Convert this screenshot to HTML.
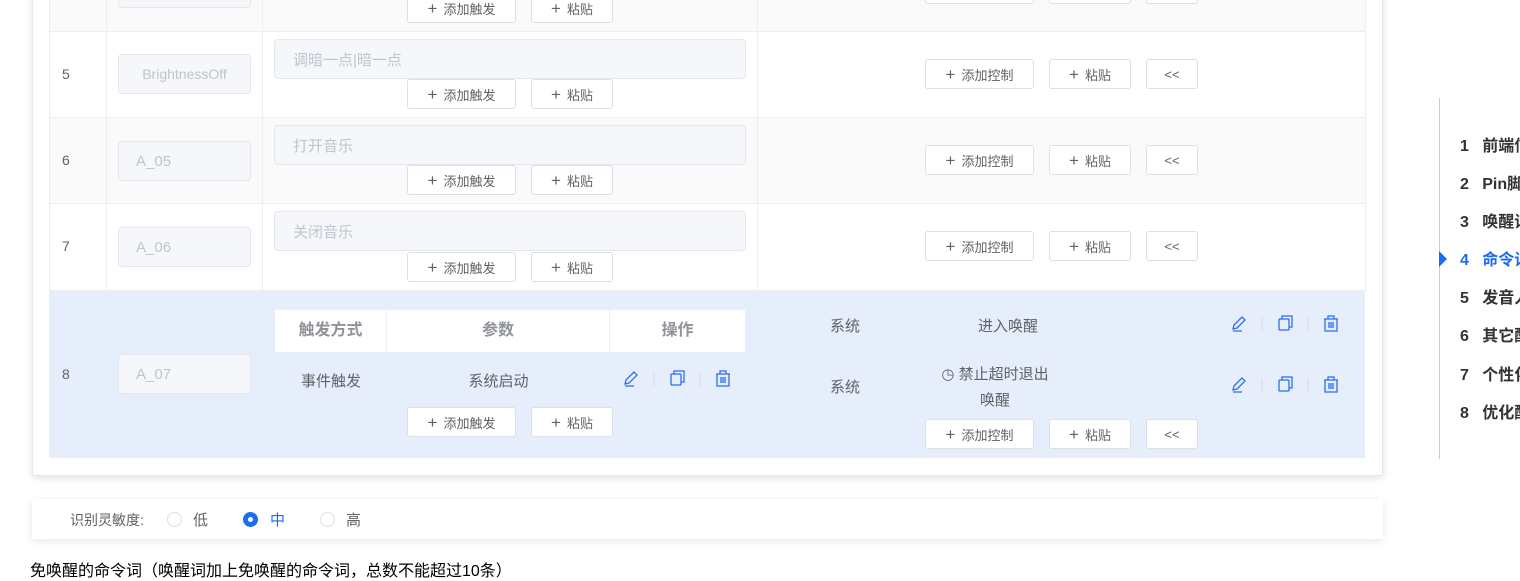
<!DOCTYPE html>
<html><head><meta charset="utf-8"><style>
*{box-sizing:border-box;margin:0;padding:0}
body{width:1520px;height:569px;overflow:hidden;background:#fff;font-family:"Liberation Sans","Noto Sans CJK SC",sans-serif;font-size:14px;color:#606266;position:relative}
.a{position:absolute}
.card{left:32px;top:-10px;width:1351px;height:486px;border:1px solid #e4e7ed;box-shadow:0 2px 8px rgba(0,0,0,.12);background:#fff}
.row{left:49px;width:1316px;border-bottom:1px solid #ebeef5}
.vl{width:1px;background:#ebeef5}
.btn{height:30px;border:1px solid #dcdfe6;border-radius:3px;background:#fff;font-size:13px;color:#606266;display:flex;align-items:center;justify-content:center}
.btn b{font-weight:normal;font-size:17px;margin-right:6px;color:#606266;line-height:1}
.inp{border:1px solid #e4e7ed;border-radius:4px;background:#f5f7fa;color:#c0c4cc;font-size:15px;display:flex;align-items:center}
.nav{font-weight:bold;font-size:15px;color:#333}
</style></head><body>
<div class="a card"></div>
<div class="a row" style="top:-10px;height:42px;background:#fafafa"></div>
<div class="a row" style="top:32px;height:86px;background:#fff"></div>
<div class="a row" style="top:118px;height:86px;background:#fafafa"></div>
<div class="a row" style="top:204px;height:87px;background:#fff"></div>
<div class="a row" style="top:291px;height:167px;background:#e6eefc;border:none"></div>
<div class="a vl" style="left:49px;top:0;height:291px"></div>
<div class="a vl" style="left:106px;top:0;height:291px"></div>
<div class="a vl" style="left:262px;top:0;height:291px"></div>
<div class="a vl" style="left:757px;top:0;height:291px"></div>
<div class="a vl" style="left:1365px;top:0;height:291px"></div>

<div class="a inp" style="left:118px;top:-30px;width:133px;height:38px"></div>
<div class="a btn" style="left:407px;top:-7px;width:109px"><b>+</b>添加触发</div>
<div class="a btn" style="left:531px;top:-7px;width:82px"><b>+</b>粘贴</div>
<div class="a btn" style="left:925px;top:-26px;width:109px"></div>
<div class="a btn" style="left:1049px;top:-26px;width:82px"></div>
<div class="a btn" style="left:1146px;top:-26px;width:52px"></div>

<div class="a" style="left:62px;top:66px">5</div>
<div class="a inp" style="left:118px;top:54px;width:133px;height:40px;justify-content:center;font-size:14px">BrightnessOff</div>
<div class="a inp" style="left:274px;top:39px;width:472px;height:40px;padding-left:18px">调暗一点|暗一点</div>
<div class="a btn" style="left:407px;top:79px;width:109px"><b>+</b>添加触发</div>
<div class="a btn" style="left:531px;top:79px;width:82px"><b>+</b>粘贴</div>
<div class="a btn" style="left:925px;top:59px;width:109px"><b>+</b>添加控制</div>
<div class="a btn" style="left:1049px;top:59px;width:82px"><b>+</b>粘贴</div>
<div class="a btn" style="left:1146px;top:59px;width:52px">&lt;&lt;</div>

<div class="a" style="left:62px;top:152px">6</div>
<div class="a inp" style="left:118px;top:141px;width:133px;height:40px;padding-left:17px">A_05</div>
<div class="a inp" style="left:274px;top:125px;width:472px;height:40px;padding-left:18px">打开音乐</div>
<div class="a btn" style="left:407px;top:165px;width:109px"><b>+</b>添加触发</div>
<div class="a btn" style="left:531px;top:165px;width:82px"><b>+</b>粘贴</div>
<div class="a btn" style="left:925px;top:145px;width:109px"><b>+</b>添加控制</div>
<div class="a btn" style="left:1049px;top:145px;width:82px"><b>+</b>粘贴</div>
<div class="a btn" style="left:1146px;top:145px;width:52px">&lt;&lt;</div>

<div class="a" style="left:62px;top:238px">7</div>
<div class="a inp" style="left:118px;top:227px;width:133px;height:40px;padding-left:17px">A_06</div>
<div class="a inp" style="left:274px;top:211px;width:472px;height:40px;padding-left:18px">关闭音乐</div>
<div class="a btn" style="left:407px;top:252px;width:109px"><b>+</b>添加触发</div>
<div class="a btn" style="left:531px;top:252px;width:82px"><b>+</b>粘贴</div>
<div class="a btn" style="left:925px;top:231px;width:109px"><b>+</b>添加控制</div>
<div class="a btn" style="left:1049px;top:231px;width:82px"><b>+</b>粘贴</div>
<div class="a btn" style="left:1146px;top:231px;width:52px">&lt;&lt;</div>

<div class="a" style="left:62px;top:366px">8</div>
<div class="a inp" style="left:118px;top:354px;width:133px;height:40px;padding-left:17px">A_07</div>
<div class="a" style="left:275px;top:310px;width:470px;height:42px;background:#fff;display:flex;font-weight:bold;font-size:16px;color:#909399;text-align:center;line-height:42px">
<div style="width:112px;border-right:1px solid #ebeef5">触发方式</div><div style="width:223px;border-right:1px solid #ebeef5">参数</div><div style="flex:1">操作</div></div>
<div class="a" style="left:275px;top:370px;width:112px;text-align:center;font-size:15px">事件触发</div>
<div class="a" style="left:387px;top:370px;width:223px;text-align:center;font-size:15px">系统启动</div>
<div class="a" style="left:810px;top:315px;width:70px;text-align:center;font-size:15px">系统</div>
<div class="a" style="left:938px;top:315px;width:140px;text-align:center;font-size:15px">进入唤醒</div>
<div class="a" style="left:810px;top:376px;width:70px;text-align:center;font-size:15px">系统</div>
<div class="a" style="left:930px;top:362px;width:130px;text-align:center;font-size:15px;line-height:26px">◷ 禁止超时退出<br>唤醒</div>
<div class="a btn" style="left:407px;top:407px;width:109px"><b>+</b>添加触发</div>
<div class="a btn" style="left:531px;top:407px;width:82px"><b>+</b>粘贴</div>
<div class="a btn" style="left:925px;top:419px;width:109px"><b>+</b>添加控制</div>
<div class="a btn" style="left:1049px;top:419px;width:82px"><b>+</b>粘贴</div>
<div class="a btn" style="left:1146px;top:419px;width:52px">&lt;&lt;</div>

<svg class="a" style="left:620px;top:369px" width="120" height="20" viewBox="0 0 120 20" fill="none" stroke="#2a6ff0" stroke-width="1.3">
<path d="M5 15l1-4 8-8 3 3-8 8z M5 17h9"/><line x1="34" y1="3" x2="34" y2="17" stroke="#dcdfe6"/>
<rect x="51" y="5" width="10" height="11" rx="1"/><path d="M54 5V2h10v11h-3"/><line x1="80" y1="3" x2="80" y2="17" stroke="#dcdfe6"/>
<path d="M96 5h14M100 5V2h6v3M97 5v12h12V5M101 8v6M103 8v6M105 8v6"/></svg>
<svg class="a" style="left:1228px;top:314px" width="120" height="20" viewBox="0 0 120 20" fill="none" stroke="#2a6ff0" stroke-width="1.3">
<path d="M5 15l1-4 8-8 3 3-8 8z M5 17h9"/><line x1="34" y1="3" x2="34" y2="17" stroke="#dcdfe6"/>
<rect x="51" y="5" width="10" height="11" rx="1"/><path d="M54 5V2h10v11h-3"/><line x1="80" y1="3" x2="80" y2="17" stroke="#dcdfe6"/>
<path d="M96 5h14M100 5V2h6v3M97 5v12h12V5M101 8v6M103 8v6M105 8v6"/></svg>
<svg class="a" style="left:1228px;top:375px" width="120" height="20" viewBox="0 0 120 20" fill="none" stroke="#2a6ff0" stroke-width="1.3">
<path d="M5 15l1-4 8-8 3 3-8 8z M5 17h9"/><line x1="34" y1="3" x2="34" y2="17" stroke="#dcdfe6"/>
<rect x="51" y="5" width="10" height="11" rx="1"/><path d="M54 5V2h10v11h-3"/><line x1="80" y1="3" x2="80" y2="17" stroke="#dcdfe6"/>
<path d="M96 5h14M100 5V2h6v3M97 5v12h12V5M101 8v6M103 8v6M105 8v6"/></svg>

<div class="a" style="left:32px;top:499px;width:1351px;height:40px;background:#fff;box-shadow:0 2px 8px rgba(0,0,0,.1)"></div>
<div class="a" style="left:70px;top:510px;font-size:14px">识别灵敏度:</div>
<div class="a" style="left:167px;top:512px;width:15px;height:15px;border:1px solid #dcdfe6;border-radius:50%"></div>
<div class="a" style="left:193px;top:509px;font-size:15px">低</div>
<div class="a" style="left:243px;top:512px;width:15px;height:15px;border-radius:50%;background:#1a6cf0"><div style="margin:5px;width:5px;height:5px;background:#fff;border-radius:50%"></div></div>
<div class="a" style="left:270px;top:509px;font-size:15px;color:#1a6cf0">中</div>
<div class="a" style="left:320px;top:512px;width:15px;height:15px;border:1px solid #dcdfe6;border-radius:50%"></div>
<div class="a" style="left:346px;top:509px;font-size:15px">高</div>
<div class="a" style="left:30px;top:557px;font-size:16px;color:#000;white-space:nowrap">免唤醒的命令词（唤醒词加上免唤醒的命令词，总数不能超过10条）</div>

<div class="a" style="left:1439px;top:98px;width:1px;height:361px;background:#ccc"></div>
<div class="a" style="left:1439px;top:251px;width:0;height:0;border-top:8px solid transparent;border-bottom:8px solid transparent;border-left:8px solid #1a6cf0"></div>
<div class="a nav" style="left:1460px;top:128px;white-space:nowrap;line-height:38.1px;font-size:16px">
<div>1&nbsp;&nbsp; 前端信</div><div>2&nbsp;&nbsp; Pin脚</div><div>3&nbsp;&nbsp; 唤醒词</div><div style="color:#1a6cf0">4&nbsp;&nbsp; 命令词</div><div>5&nbsp;&nbsp; 发音人</div><div>6&nbsp;&nbsp; 其它配</div><div>7&nbsp;&nbsp; 个性化</div><div>8&nbsp;&nbsp; 优化配</div></div>
</body></html>
